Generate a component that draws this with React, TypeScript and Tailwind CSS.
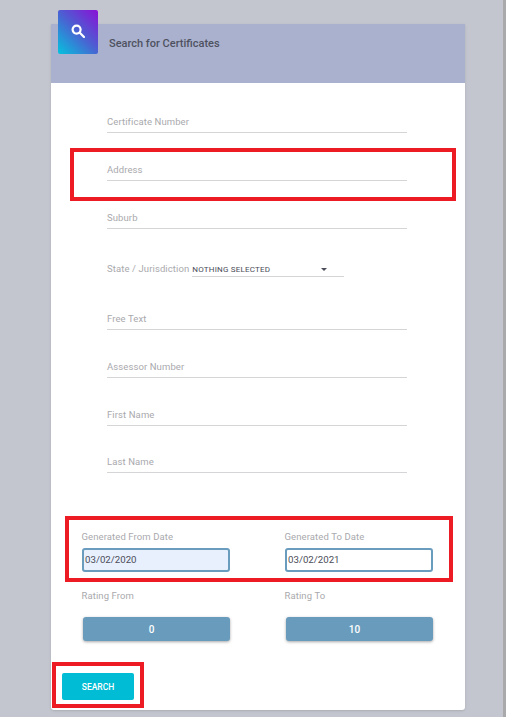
import React from 'react';

const FIELD_LABEL = 'text-[9.5px] leading-[10px] text-[#a9a9ad] tracking-[0.1px]';
const GRID_LABEL = `${FIELD_LABEL} -ml-[0.5px]`;
const RATING_BTN = 'ml-px mt-[16px] flex h-[24px] items-center justify-center rounded-[3px] bg-[#699cbc] pr-[10px] text-[10px] font-medium text-white shadow-[0_1px_3px_rgba(0,0,0,0.35)]';

const UnderlineField: React.FC<{ label: string; className?: string }> = ({ label, className }) => (
  <div className={`ml-[56px] w-[300px] flex items-end border-b border-[#d5d5d8] pb-[5px] ${className ?? 'h-[48px]'}`}>
    <span className={FIELD_LABEL}>{label}</span>
  </div>
);

const App: React.FC = () => {
  return (
    <div className="relative h-[717px] w-[506px] overflow-hidden bg-[#c3c6ce] pt-[24px] font-['Roboto',sans-serif]">
      <div className="relative ml-[51px] h-[686px] w-[414px] rounded-b-[3px] bg-white shadow-sm">
        {/* header */}
        <div className="flex h-[59px] items-start bg-[#a9b1cf] pl-[58px] pt-[12px]">
          <span className="text-[11px] font-medium text-[#4f5160]">Search for Certificates</span>
        </div>
        <div className="absolute left-[7px] top-[-14px] flex h-[44px] w-[40px] items-center justify-center rounded-[2px] bg-[linear-gradient(45deg,#04c3de,#4a62d2,#8a10d6)]">
          <svg width="14" height="14" viewBox="0 0 14 14" fill="none" stroke="white" strokeWidth="2.2" className="-mt-[3px] -ml-[1px]">
            <circle cx="5.6" cy="5.6" r="4" />
            <path d="M8.8 8.8 L13 13" strokeLinecap="round" />
          </svg>
        </div>

        <div className="pt-[2px]">
          <UnderlineField label="Certificate Number" />
          <UnderlineField label="Address" />
          <UnderlineField label="Suburb" />
          <div className="ml-[56px] flex h-[48px] items-end">
            <span className={`${FIELD_LABEL} mb-[3px]`}>State / Jurisdiction</span>
            <div className="ml-[3px] flex h-[20px] w-[152px] items-end justify-between border-b border-[#d5d5d8] pr-[17px]">
              <span className="text-[8px] leading-[12px] tracking-[0.2px] text-[#4a4c58]">NOTHING SELECTED</span>
              <span className="mb-[5px] h-0 w-0 border-x-[3px] border-t-[3px] border-x-transparent border-t-[#4a4c58]" />
            </div>
          </div>
          <UnderlineField label="Free Text" className="h-[53px]" />
          <UnderlineField label="Assessor Number" />
          <UnderlineField label="First Name" />
          <UnderlineField label="Last Name" className="h-[47px]" />
        </div>

        {/* dates */}
        <div className="mt-[59px] grid grid-cols-[148px_148px] gap-x-[55px] pl-[31px]">
          <div>
            <div className={GRID_LABEL}>Generated From Date</div>
            <div className="mt-[6px] flex h-[24px] items-center rounded-[3px] border-[2px] border-[#6a9cbd] bg-[#e8f0fe] pl-px text-[9.7px] text-[#4a4c58]">03/02/2020</div>
          </div>
          <div>
            <div className={GRID_LABEL}>Generated To Date</div>
            <div className="mt-[6px] flex h-[24px] items-center rounded-[3px] border-[2px] border-[#6a9cbd] bg-white pl-px text-[9.7px] text-[#4a4c58]">03/02/2021</div>
          </div>
          <div className="mt-[19px]">
            <div className={GRID_LABEL}>Rating From</div>
            <div className={RATING_BTN}>0</div>
          </div>
          <div className="mt-[19px]">
            <div className={GRID_LABEL}>Rating To</div>
            <div className={RATING_BTN}>10</div>
          </div>
        </div>

        <button className="ml-[11px] mt-[32px] flex h-[27px] w-[72px] items-center justify-center rounded-[2px] bg-[#00bcd4] pt-px text-[8.5px] font-medium text-white">
          SEARCH
        </button>
      </div>

      {/* scrollbar edge */}
      <div className="absolute right-0 top-0 h-full w-[3px] bg-[#a9a9ab]" />

      {/* red annotation boxes */}
      <div className="absolute left-[70px] top-[148px] h-[53px] w-[386px] border-[4px] border-[#ed1c24]" />
      <div className="absolute left-[65px] top-[516px] h-[66px] w-[388px] border-[4px] border-[#ed1c24]" />
      <div className="absolute left-[52px] top-[662px] h-[46px] w-[92px] border-[4px] border-[#ed1c24]" />
    </div>
  );
};

export default App;
